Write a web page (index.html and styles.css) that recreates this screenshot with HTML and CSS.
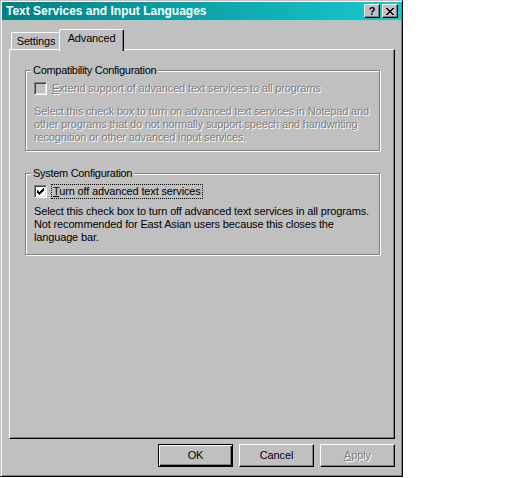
FILE: index.html
```html
<!DOCTYPE html>
<html>
<head>
<meta charset="utf-8">
<link rel="stylesheet" href="styles.css">
</head>
<body>
<div class="window">
  <div class="titlebar">
    <span class="title">Text Services and Input Languages</span>
    <div class="tbtns">
      <div class="tbtn help">?</div>
      <div class="tbtn close">
        <svg width="8" height="7" viewBox="0 0 8 7" shape-rendering="crispEdges"><path fill="#000" d="M0 0h2v1h-2zM6 0h2v1h-2zM1 1h2v1h-2zM5 1h2v1h-2zM2 2h4v1h-4zM3 3h2v1h-2zM2 4h4v1h-4zM1 5h2v1h-2zM5 5h2v1h-2zM0 6h2v1h-2zM6 6h2v1h-2z"/></svg>
      </div>
    </div>
  </div>
  <div class="client">
    <div class="tabs">
      <div class="tab settings">Settings</div>
      <div class="tab active">Advanced</div>
    </div>
    <div class="panel">
      <fieldset class="group g1">
        <legend>Compatibility Configuration</legend>
        <div class="check-row">
          <span class="checkbox disabled"></span>
          <span class="label etched"><u>E</u>xtend support of advanced text services to all programs</span>
        </div>
        <p class="desc etched">Select this check box to turn on advanced text services in Notepad and<br>other programs that do not normally support speech and handwriting<br>recognition or other advanced input services.</p>
      </fieldset>
      <fieldset class="group g2">
        <legend>System Configuration</legend>
        <div class="check-row focus-row">
          <span class="checkbox"><svg width="9" height="9" viewBox="0 0 9 9" shape-rendering="crispEdges"><path fill="#000" d="M1 3H2V4H3V5H4V4H5V3H6V2H7V1H8V4H7V5H6V6H5V7H4V8H3V7H2V6H1Z"/></svg></span>
          <span class="label focus"><u>T</u>urn off advanced text services</span>
        </div>
        <p class="desc">Select this check box to turn off advanced text services in all programs.<br>Not recommended for East Asian users because this closes the<br>language bar.</p>
      </fieldset>
    </div>
    <div class="buttons">
      <div class="btn default">OK</div>
      <div class="btn">Cancel</div>
      <div class="btn disabled"><span class="etched"><u>A</u>pply</span></div>
    </div>
  </div>
</div>
</body>
</html>
```
FILE: styles.css
```css
body {
  margin: 0;
  background: #fff;
  font-family: "Liberation Sans", Arial, sans-serif;
  font-size: 11px;
  letter-spacing: -0.15px;
  color: #000;
}
.window {
  width: 403px;
  height: 477px;
  box-sizing: border-box;
  background: #c0c0c0;
  border: 1px solid;
  border-color: #c0c0c0 #000 #000 #c0c0c0;
  box-shadow: inset 1px 1px #fff, inset -1px -1px #808080;
  padding: 1px;
  display: flex;
  flex-direction: column;
}
.titlebar {
  height: 18px;
  flex: none;
  display: flex;
  align-items: center;
  padding: 0 3px 0 4px;
  background: linear-gradient(90deg, #008080, #18c8d0);
  color: #fff;
  font-weight: bold;
}
.title {
  flex: 1;
  font-size: 12px;
  letter-spacing: 0;
  line-height: 14px;
  white-space: nowrap;
}
.tbtns {
  display: flex;
  gap: 2px;
}
.tbtn {
  width: 16px;
  height: 14px;
  box-sizing: border-box;
  background: #c0c0c0;
  border: 1px solid;
  border-color: #fff #000 #000 #fff;
  box-shadow: inset -1px -1px #808080;
  display: flex;
  align-items: center;
  justify-content: center;
  color: #000;
  font-weight: bold;
  font-size: 11px;
  line-height: 12px;
}
.client {
  flex: 1;
  display: flex;
  flex-direction: column;
  padding: 9px 6px 0 7px;
}
.tabs {
  display: flex;
  align-items: flex-end;
  height: 20px;
  padding-left: 2px;
  position: relative;
  z-index: 1;
}
.tab {
  height: 17px;
  box-sizing: border-box;
  border: 1px solid;
  border-bottom: none;
  border-color: #fff #000 transparent #fff;
  box-shadow: inset -1px 0 #808080;
  border-radius: 2px 2px 0 0;
  background: #c0c0c0;
  text-align: center;
  padding-top: 2px;
  line-height: 13px;
}
.tab.settings {
  width: 50px;
}
.tab.active {
  width: 65px;
  height: 22px;
  margin-left: -2px;
  margin-bottom: -2px;
  position: relative;
  z-index: 2;
}
.panel {
  height: 390px;
  flex: none;
  box-sizing: border-box;
  border: 1px solid;
  border-color: #fff #000 #000 #fff;
  box-shadow: inset -1px -1px #808080;
  padding: 14px 14px 0 15px;
}
.group {
  margin: 0;
  min-width: 0;
  border: 1px solid #808080;
  box-shadow: inset 1px 1px #fff, 1px 1px #fff;
  padding: 5px 8px 6px 8px;
}
.group legend {
  padding: 0 2px;
  margin-left: -3px;
  line-height: 13px;
  letter-spacing: -0.3px;
  background: #c0c0c0;
}
.g2 {
  margin-top: 16px;
  padding: 4px 8px 10px 8px;
}
.check-row {
  display: flex;
  align-items: center;
  height: 13px;
}
.focus-row {
  height: 15px;
}
.checkbox {
  width: 13px;
  height: 13px;
  flex: none;
  box-sizing: border-box;
  border: 1px solid;
  border-color: #808080 #fff #fff #808080;
  box-shadow: inset 1px 1px #404040, inset -1px -1px #dfdfdf;
  background: #fff;
  padding: 1px;
}
.checkbox svg {
  display: block;
}
.checkbox.disabled {
  background: #c0c0c0;
}
.label {
  margin-left: 5px;
  line-height: 13px;
  white-space: nowrap;
}
.label.focus {
  margin-left: 4px;
  padding: 0 1px;
  border: 1px dotted #000;
}
.desc {
  margin: 10px 0 0;
  line-height: 13px;
  white-space: nowrap;
}
.g2 .desc {
  margin-top: 6px;
}
.etched {
  color: #808080;
  text-shadow: 1px 1px 0 #fff;
}
.buttons {
  display: flex;
  justify-content: flex-end;
  gap: 6px;
  margin-top: 5px;
}
.btn {
  width: 75px;
  height: 23px;
  box-sizing: border-box;
  border: 1px solid;
  border-color: #fff #000 #000 #fff;
  box-shadow: inset -1px -1px #808080;
  display: flex;
  align-items: center;
  justify-content: center;
  line-height: 13px;
}
.btn.default {
  border-color: #000;
  box-shadow: inset 1px 1px #fff, inset -1px -1px #000, inset -2px -2px #808080;
}
```
